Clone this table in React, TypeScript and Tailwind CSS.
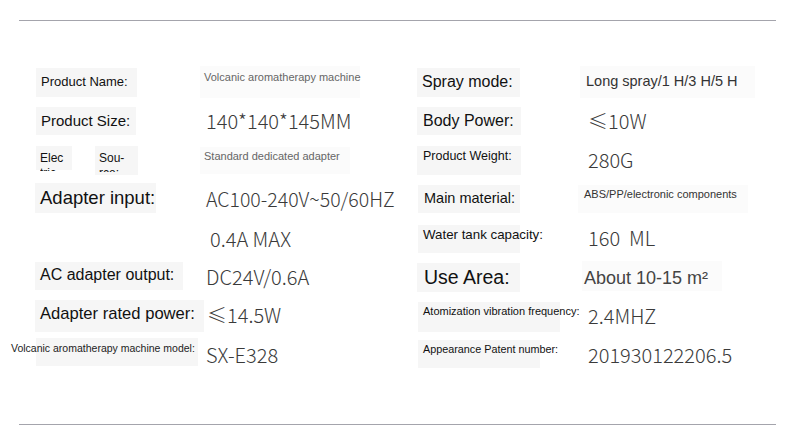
import React from "react";

const sans = "font-['Liberation_Sans',Arial,sans-serif]";
const thin = "font-['Noto_Sans_CJK_SC','Noto_Sans',sans-serif] font-light text-[#3a3a3a]";

type Cell = { box: string; text: string; content: React.ReactNode };

const left: [Cell, Cell][] = [
  [
    { box: "mt-[5px] h-[29px] w-[101px] bg-[#f6f6f6] pl-[5px] pt-[6px]", text: "text-[13px]", content: "Product Name:" },
    { box: "mt-[3px] h-[32px] w-[160px] bg-[#fbfbfb] -ml-[4px] pl-[4px] pt-[5px] whitespace-nowrap", text: `${sans} text-[11px] text-[#666]`, content: "Volcanic aromatherapy machine" },
  ],
  [
    { box: "mt-[5px] h-[28px] w-[100px] bg-[#f6f6f6] pl-[5px] pt-[5px]", text: "text-[15px]", content: "Product Size:" },
    { box: "pl-[2px] pt-[6px]", text: `${thin} text-[20px]`, content: "140*140*145MM" },
  ],
  [
    {
      box: "mt-[5px] flex gap-[23px]",
      text: "text-[12px] leading-[13px]",
      content: (
        <>
          <div className="h-[24px] w-[36px] bg-[#f6f6f6] pl-[4px] pt-[5px]">
            <div className="h-[20px] overflow-hidden">Elec<br />tric</div>
          </div>
          <div className="h-[29px] w-[43px] bg-[#f6f6f6] pl-[4px] pt-[5px]">
            <div className="h-[21px] overflow-hidden">Sou-<br />rce:</div>
          </div>
        </>
      ),
    },
    { box: "mt-[6px] h-[27px] w-[150px] bg-[#fbfbfb] -ml-[4px] pl-[4px] pt-[3px] whitespace-nowrap", text: `${sans} text-[11px] text-[#666]`, content: "Standard dedicated adapter" },
  ],
  [
    { box: "mt-[3px] h-[30px] w-[121px] -ml-[1px] bg-[#f6f6f6] pl-[5px] pt-[3px] whitespace-nowrap", text: "text-[18.5px]", content: "Adapter input:" },
    { box: "pl-[2px] pt-[7px] whitespace-nowrap", text: `${thin} text-[19.5px]`, content: "AC100-240V~50/60HZ" },
  ],
  [
    { box: "", text: "", content: null },
    { box: "pl-[6px] pt-[7px]", text: `${thin} text-[20px]`, content: "0.4A MAX" },
  ],
  [
    { box: "mt-[4px] h-[28px] w-[148px] -ml-[1px] bg-[#f6f6f6] pl-[5px] pt-[3px] whitespace-nowrap", text: "text-[16px]", content: "AC adapter output:" },
    { box: "pl-[2px] pt-[6px]", text: `${thin} text-[20px]`, content: "DC24V/0.6A" },
  ],
  [
    { box: "mt-[3px] h-[32px] w-[172px] -ml-[1px] bg-[#f6f6f6] pl-[5px] pt-[4px] whitespace-nowrap", text: "text-[16.6px]", content: "Adapter rated power:" },
    { box: "pl-[3px] pt-[5px]", text: `${thin} text-[20px]`, content: "≤14.5W" },
  ],
  [
    {
      box: "mt-[2px] h-[28px] w-[162px] bg-[#f6f6f6] pt-[4px] whitespace-nowrap",
      text: "text-[10.5px] text-[#222]",
      content: <span className="inline-block -ml-[25px]">Volcanic aromatherapy machine model:</span>,
    },
    { box: "pl-[2px] pt-[6px]", text: `${thin} text-[20px]`, content: "SX-E328" },
  ],
];

const right: [Cell, Cell][] = [
  [
    { box: "mt-[5px] h-[29px] w-[103px] bg-[#f6f6f6] pl-[5px] pt-[4px]", text: "text-[16px]", content: "Spray mode:" },
    { box: "mt-[3px] h-[32px] w-[175px] bg-[#fbfbfb] -ml-[4px] pl-[6px] pt-[6px] whitespace-nowrap", text: `${sans} text-[14.5px] text-[#333]`, content: "Long spray/1 H/3 H/5 H" },
  ],
  [
    { box: "mt-[5px] h-[28px] w-[104px] bg-[#f6f6f6] pl-[6px] pt-[4px]", text: "text-[16px]", content: "Body Power:" },
    { box: "pl-[4px] pt-[6px]", text: `${thin} text-[20px]`, content: "≤10W" },
  ],
  [
    { box: "mt-[5px] h-[29px] w-[104px] bg-[#f6f6f6] pl-[6px] pt-[3px] whitespace-nowrap", text: "text-[12.5px]", content: "Product Weight:" },
    { box: "pl-[4px] pt-[6px]", text: `${thin} text-[20px]`, content: "280G" },
  ],
  [
    { box: "mt-[5px] h-[28px] w-[102px] ml-[1px] bg-[#f6f6f6] pl-[6px] pt-[4px] whitespace-nowrap", text: "text-[14.5px]", content: "Main material:" },
    { box: "mt-[5px] h-[28px] w-[170px] bg-[#fbfbfb] -ml-[6px] pl-[6px] pt-[3px] whitespace-nowrap", text: `${sans} text-[11px] text-[#333]`, content: "ABS/PP/electronic components" },
  ],
  [
    { box: "mt-[6px] h-[28px] w-[102px] ml-[1px] bg-[#f6f6f6] pl-[5px] pt-[2px] whitespace-nowrap", text: "text-[13.3px]", content: "Water tank capacity:" },
    { box: "pl-[4px] pt-[6px] whitespace-pre", text: `${thin} text-[20px]`, content: "160  ML" },
  ],
  [
    { box: "mt-[5px] h-[29px] w-[103px] bg-[#f6f6f6] pl-[7px] pt-[2px] whitespace-nowrap", text: "text-[19.5px]", content: "Use Area:" },
    { box: "mt-[3px] h-[30px] w-[140px] bg-[#fbfbfb] -ml-[2px] pl-[2px] pt-[6px] whitespace-nowrap", text: `${sans} text-[18px] text-[#444]`, content: "About 10-15 m²" },
  ],
  [
    { box: "mt-[5px] h-[30px] w-[142px] ml-[1px] bg-[#f6f6f6] pl-[5px] pt-[3px] whitespace-nowrap", text: "text-[11px]", content: "Atomization vibration frequency:" },
    { box: "pl-[4px] pt-[6px]", text: `${thin} text-[20px]`, content: "2.4MHZ" },
  ],
  [
    { box: "mt-[4px] h-[28px] w-[122px] ml-[1px] bg-[#f6f6f6] pl-[5px] pt-[3px] whitespace-nowrap", text: "text-[10.8px]", content: "Appearance Patent number:" },
    { box: "pl-[4px] pt-[6px]", text: `${thin} text-[20px]`, content: "201930122206.5" },
  ],
];

const Box = ({ cell }: { cell: Cell }) => (
  <div className="flex items-start">
    <div className={`${cell.box} ${cell.text} leading-tight`}>{cell.content}</div>
  </div>
);

export default function App() {
  return (
    <div className={`w-[790px] h-[427px] bg-white overflow-hidden flex flex-col ${sans} text-[#111]`}>
      <div className="mt-[20px] ml-[19px] mr-[14px] border-t border-[#a4a4ac]" />
      <div className="mt-[42px] pl-[36px] grid grid-cols-[168px_213px_167px_1fr] auto-rows-[39px]">
        {left.map((row, i) => (
          <React.Fragment key={i}>
            <Box cell={row[0]} />
            <Box cell={row[1]} />
            <Box cell={right[i][0]} />
            <Box cell={right[i][1]} />
          </React.Fragment>
        ))}
      </div>
      <div className="mt-auto mb-[2px] ml-[19px] mr-[14px] border-t border-[#a4a4ac]" />
    </div>
  );
}
